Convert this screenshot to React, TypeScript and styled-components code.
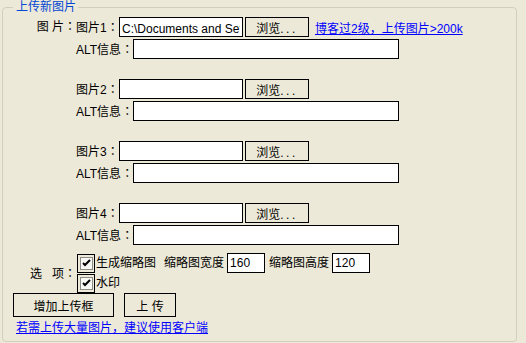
import React from "react";
import styled, { createGlobalStyle } from "styled-components";

const GlobalStyle = createGlobalStyle`
  html, body { margin: 0; padding: 0; background: #ECE9D8; }
  body {
    font-family: "Liberation Sans", "Noto Sans CJK SC", sans-serif;
    font-size: 12px;
    color: #000;
  }
  * { box-sizing: border-box; }
`;

const Page = styled.div`
  width: 526px;
  height: 343px;
  padding-left: 2px;
`;

const Group = styled.fieldset`
  margin: 0;
  padding: 0;
  width: 515px;
  height: 342px;
  border: 1px solid #d0d0bf;
  border-radius: 4px;
  min-inline-size: 0;
`;

const Legend = styled.legend`
  margin-left: 10px;
  padding: 0 2px 0 3px;
  color: #0046d5;
  font-size: 12px;
  line-height: 14px;
`;

const Body = styled.div`
  padding: 3px 0 0 10px;
`;

const FieldGrid = styled.div`
  display: grid;
  grid-template-columns: 63px auto;
  row-gap: 8px;
  align-items: start;
`;

const SideLabel = styled.div<{ $center?: boolean }>`
  text-align: right;
  white-space: pre;
  line-height: 18px;
  align-self: ${(p) => (p.$center ? "center" : "start")};
`;

const Colon = styled.span`
  font-family: "Noto Sans CJK JP", "Noto Sans CJK SC", sans-serif;
`;

const Pictures = styled.div`
  display: flex;
  flex-direction: column;
  gap: 20px;
`;

const PicGroup = styled.div`
  display: flex;
  flex-direction: column;
  gap: 2px;
`;

const Row = styled.div`
  display: flex;
  align-items: center;
  height: 20px;
`;

const RowLabel = styled.span<{ $w: number }>`
  width: ${(p) => p.$w}px;
  flex: none;
  white-space: nowrap;
  line-height: 20px;
`;

const TextBox = styled.input<{ $w: number; $ml?: number }>`
  width: ${(p) => p.$w}px;
  height: 20px;
  margin: 0 0 0 ${(p) => p.$ml ?? 0}px;
  padding: 0 2px;
  border: 1px solid #000;
  background: #fff;
  font-family: "Liberation Sans", "Noto Sans CJK SC", sans-serif;
  font-size: 12px;
  color: #000;
  outline: none;
  flex: none;
`;

const XPButton = styled.button<{ $w: number; $h: number; $ml?: number }>`
  width: ${(p) => p.$w}px;
  height: ${(p) => p.$h}px;
  margin: 0 0 0 ${(p) => p.$ml ?? 0}px;
  padding: 0;
  border: 1px solid #000;
  background: #ece9d8;
  font-family: "Liberation Sans", "Noto Sans CJK SC", sans-serif;
  font-size: 12px;
  color: #000;
  white-space: pre;
  flex: none;
`;

const Dots = styled.span`
  letter-spacing: 2.5px;
`;

const Link = styled.a<{ $ml?: number }>`
  color: #0000ff;
  text-decoration: underline;
  margin-left: ${(p) => p.$ml ?? 0}px;
  white-space: nowrap;
  cursor: pointer;
`;

const Options = styled.div`
  display: flex;
  flex-direction: column;
`;

const OptLine = styled.div`
  display: flex;
  align-items: center;
  height: 20px;
`;

const CheckFrame = styled.span`
  width: 18px;
  height: 19px;
  margin: 0 1px;
  border: 1px solid #000;
  display: flex;
  align-items: center;
  justify-content: center;
  flex: none;
`;

const CheckInner = styled.span`
  width: 13px;
  height: 13px;
  border: 1px solid #8c8c84;
  background: #f7f7f4;
  display: flex;
  align-items: center;
  justify-content: center;
`;

const OptText = styled.span<{ $ml?: number }>`
  margin-left: ${(p) => p.$ml ?? 0}px;
  white-space: nowrap;
  line-height: 20px;
`;

const ButtonRow = styled.div`
  display: flex;
  gap: 10px;
`;

const FooterLink = styled(Link)`
  display: block;
  width: fit-content;
  margin-top: 3px;
  margin-left: 3px;
  line-height: 16px;
`;

const Check = () => (
  <CheckFrame>
    <CheckInner>
      <svg width="11" height="11" viewBox="0 0 11 11">
        <path d="M2 5 L4 7 L9 2" stroke="#000" strokeWidth="2" fill="none" />
      </svg>
    </CheckInner>
  </CheckFrame>
);

const pics = [
  { n: 1, value: "C:\\Documents and Settings\\Administrator\\桌面\\photo.jpg", link: true },
  { n: 2, value: "" },
  { n: 3, value: "" },
  { n: 4, value: "" },
];

export default function App() {
  return (
    <>
      <GlobalStyle />
      <Page>
        <Group>
          <Legend>上传新图片</Legend>
          <Body>
            <FieldGrid>
              <SideLabel>
                图 片<Colon>：</Colon>
              </SideLabel>
              <Pictures>
                {pics.map((p) => (
                  <PicGroup key={p.n}>
                    <Row>
                      <RowLabel $w={43}>
                        图片{p.n}
                        <Colon>：</Colon>
                      </RowLabel>
                      <TextBox $w={124} value={p.value} readOnly />
                      <XPButton $w={64} $h={20} $ml={2}>
                        浏览<Dots>...</Dots>
                      </XPButton>
                      {p.link && <Link $ml={6}>博客过2级，上传图片&gt;200k</Link>}
                    </Row>
                    <Row>
                      <RowLabel $w={57}>
                        ALT信息<Colon>：</Colon>
                      </RowLabel>
                      <TextBox $w={266} defaultValue="" />
                    </Row>
                  </PicGroup>
                ))}
              </Pictures>
              <SideLabel $center>
                {"选   项"}
                <Colon>：</Colon>
              </SideLabel>
              <Options>
                <OptLine>
                  <Check />
                  <OptText>生成缩略图</OptText>
                  <OptText $ml={8}>缩略图宽度</OptText>
                  <TextBox $w={38} $ml={3} defaultValue="160" />
                  <OptText $ml={4}>缩略图高度</OptText>
                  <TextBox $w={38} $ml={3} defaultValue="120" />
                </OptLine>
                <OptLine>
                  <Check />
                  <OptText>水印</OptText>
                </OptLine>
              </Options>
            </FieldGrid>
            <ButtonRow>
              <XPButton $w={101} $h={24}>增加上传框</XPButton>
              <XPButton $w={52} $h={24}>上 传</XPButton>
            </ButtonRow>
            <FooterLink>若需上传大量图片，建议使用客户端</FooterLink>
          </Body>
        </Group>
      </Page>
    </>
  );
}
